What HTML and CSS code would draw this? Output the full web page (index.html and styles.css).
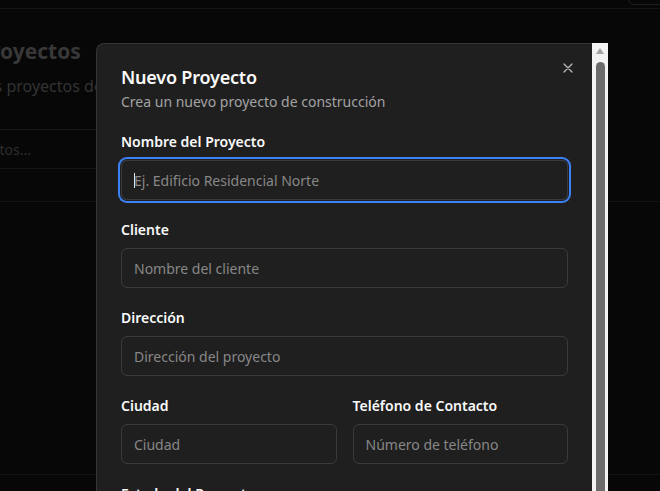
FILE: index.html
```html
<!DOCTYPE html>
<html lang="es">
<head>
<meta charset="utf-8">
<title>Nuevo Proyecto</title>
<link rel="stylesheet" href="styles.css">
</head>
<body>
<header class="topbar">
  <div class="top-btn"></div>
</header>
<main class="page">
  <h1 class="page-title">Proyectos</h1>
  <p class="page-sub">Gestiona tus proyectos de construcción</p>
  <div class="search"><span class="search-ph">Buscar proyectos...</span></div>
  <div class="table">
    <div class="row row-head"></div>
    <div class="row row-body"></div>
  </div>
</main>

<div class="modal">
  <div class="modal-body">
    <button class="close" aria-label="Cerrar">
      <svg width="16" height="16" viewBox="0 0 24 24" fill="none" stroke="currentColor" stroke-width="2" stroke-linecap="round"><path d="M18 6 6 18M6 6l12 12"/></svg>
    </button>
    <div class="modal-head">
      <h2 class="modal-title">Nuevo Proyecto</h2>
      <p class="modal-desc">Crea un nuevo proyecto de construcción</p>
    </div>
    <form class="form">
      <div class="field">
        <label class="label">Nombre del Proyecto</label>
        <div class="input focused"><span class="caret"></span>Ej. Edificio Residencial Norte</div>
      </div>
      <div class="field">
        <label class="label">Cliente</label>
        <div class="input">Nombre del cliente</div>
      </div>
      <div class="field">
        <label class="label">Dirección</label>
        <div class="input">Dirección del proyecto</div>
      </div>
      <div class="grid2">
        <div class="field">
          <label class="label">Ciudad</label>
          <div class="input">Ciudad</div>
        </div>
        <div class="field">
          <label class="label">Teléfono de Contacto</label>
          <div class="input">Número de teléfono</div>
        </div>
      </div>
      <div class="field">
        <label class="label">Estado del Proyecto</label>
        <div class="input">Planificación</div>
      </div>
    </form>
  </div>
  <div class="scrollbar">
    <div class="sb-arrow"></div>
    <div class="sb-thumb"></div>
  </div>
</div>
</body>
</html>
```
FILE: styles.css
```css
* { box-sizing: border-box; }
html, body { margin: 0; padding: 0; }
body {
  width: 660px;
  height: 491px;
  overflow: hidden;
  background: #070707;
  font-family: "Noto Sans", "Open Sans", sans-serif;
  position: relative;
}
.topbar {
  height: 9px;
  border-bottom: 1px solid #161616;
  display: flex;
  justify-content: flex-end;
}
.top-btn {
  width: 40px;
  height: 36px;
  margin-top: -31px;
  margin-right: -8px;
  border: 1px solid #1e1e1e;
  border-radius: 6px;
}
.page { padding-top: 26px; }
.page-title {
  margin: 0 0 0 -22px;
  font-size: 21px;
  font-weight: 700;
  line-height: 32px;
  color: #383838;
}
.page-sub {
  margin: 7px 0 0 -92px;
  font-size: 16px;
  line-height: 24px;
  color: #333;
}
.search {
  margin-top: 31px;
  height: 40px;
  width: 420px;
  border-top: 1px solid #161616;
  border-bottom: 1px solid #161616;
  display: flex;
  align-items: center;
}
.search-ph {
  margin-left: -93px;
  font-size: 14px;
  color: #2e2e2e;
}
.table { margin-top: 32px; }
.row { border-top: 1px solid #141414; }
.row-head { height: 273px; }

.modal {
  position: absolute;
  left: 96px;
  top: 43px;
  width: 512px;
  height: 470px;
  display: flex;
}
.modal-body {
  position: relative;
  flex: 1;
  background: #1f1f1f;
  border-top: 1px solid #343434;
  border-left: 1px solid #343434;
  border-top-left-radius: 8px;
  padding: 19px 24px 24px;
}
.close {
  position: absolute;
  top: 16px;
  right: 16px;
  width: 16px;
  height: 16px;
  padding: 0;
  border: 0;
  background: none;
  color: #b4b4b4;
  display: flex;
}
.modal-title {
  margin: 0;
  font-size: 18px;
  line-height: 28px;
  font-weight: 600;
  color: #fafafa;
  letter-spacing: -0.2px;
}
.modal-desc {
  margin: 1px 0 0;
  font-size: 14px;
  line-height: 20px;
  color: #a3a3a3;
}
.form {
  margin-top: 20px;
  display: flex;
  flex-direction: column;
  gap: 20px;
}
.field {
  display: flex;
  flex-direction: column;
  gap: 8px;
}
.label {
  font-size: 14px;
  line-height: 20px;
  font-weight: 600;
  color: #fafafa;
}
.input {
  position: relative;
  height: 40px;
  border: 1px solid #3a3a3a;
  border-radius: 6px;
  padding: 0 12px;
  display: flex;
  align-items: center;
  font-size: 14px;
  color: #878787;
  white-space: nowrap;
}
.input.focused {
  box-shadow: 0 0 0 1px #1f1f1f, 0 0 0 3px #3b82f6;
}
.caret {
  position: absolute;
  left: 12px;
  top: 12px;
  width: 1px;
  height: 15px;
  background: #e5e5e5;
}
.grid2 {
  display: grid;
  grid-template-columns: 1fr 1fr;
  gap: 16px;
}
.scrollbar {
  width: 16px;
  background: #f3f3f3;
  display: flex;
  flex-direction: column;
  align-items: center;
  padding-top: 5px;
}
.sb-arrow {
  width: 0;
  height: 0;
  border-left: 4px solid transparent;
  border-right: 4px solid transparent;
  border-bottom: 6px solid #a3a3a3;
}
.sb-thumb {
  margin-top: 8px;
  width: 9px;
  flex: 1;
  background: #6b6b6b;
  border-radius: 5px 5px 0 0;
}
```
